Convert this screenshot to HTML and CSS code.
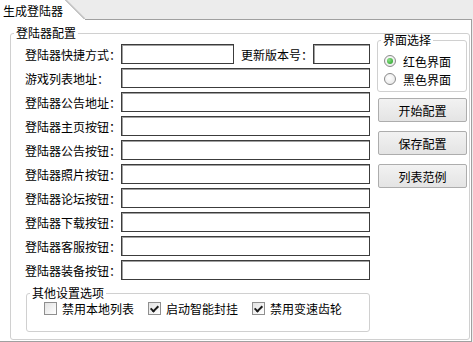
FILE: index.html
```html
<!DOCTYPE html>
<html lang="zh-CN">
<head>
  <meta charset="UTF-8" />
  <title>生成登陆器</title>
  <link rel="stylesheet" href="styles.css">
</head>
<body>
  <div class="tabbar">
    <div class="tab">生成登陆器</div>
    <svg class="tab-edge" width="20" height="20" viewBox="0 0 20 20">
      <polygon points="0,0 1,0 20,19 20,20 0,20" fill="#fff"/>
      <line x1="0.5" y1="0" x2="19.5" y2="19" stroke="#8c8c8c" stroke-width="1"/>
      <line x1="1.5" y1="0" x2="20.5" y2="19" stroke="#c9c9c9" stroke-width="1"/>
    </svg>
    <div class="tab-rest"></div>
  </div>

  <div class="panel">
    <fieldset class="group main">
      <legend>登陆器配置</legend>
      <div class="main-grid">
        <div class="fields">
          <div class="row">
            <label>登陆器快捷方式：</label>
            <input type="text" class="short">
            <label class="ver">更新版本号：</label>
            <input type="text" class="ver-input">
          </div>
          <div class="row"><label>游戏列表地址：</label><input type="text"></div>
          <div class="row"><label>登陆器公告地址：</label><input type="text"></div>
          <div class="row"><label>登陆器主页按钮：</label><input type="text"></div>
          <div class="row"><label>登陆器公告按钮：</label><input type="text"></div>
          <div class="row"><label>登陆器照片按钮：</label><input type="text"></div>
          <div class="row"><label>登陆器论坛按钮：</label><input type="text"></div>
          <div class="row"><label>登陆器下载按钮：</label><input type="text"></div>
          <div class="row"><label>登陆器客服按钮：</label><input type="text"></div>
          <div class="row"><label>登陆器装备按钮：</label><input type="text"></div>

          <fieldset class="group other">
            <legend>其他设置选项</legend>
            <div class="checks">
              <label class="check"><input type="checkbox">禁用本地列表</label>
              <label class="check"><input type="checkbox" checked>启动智能封挂</label>
              <label class="check"><input type="checkbox" checked>禁用变速齿轮</label>
            </div>
          </fieldset>
        </div>

        <div class="side">
          <fieldset class="group skin">
            <legend>界面选择</legend>
            <label class="radio"><input type="radio" name="skin" checked>红色界面</label>
            <label class="radio"><input type="radio" name="skin">黑色界面</label>
          </fieldset>
          <button>开始配置</button>
          <button>保存配置</button>
          <button>列表范例</button>
        </div>
      </div>
    </fieldset>
  </div>
</body>
</html>
```

FILE: styles.css
```css
body {
  margin: 0;
  background: #ececec;
  color: #000;
  font-family: "Noto Sans CJK SC", sans-serif;
  font-size: 12px;
}

.tabbar {
  display: flex;
  width: 472px;
  height: 20px;
}

.tab {
  width: 65px;
  padding: 3px 0 0 3px;
  box-sizing: border-box;
  background: #fff;
  line-height: 16px;
  white-space: nowrap;
}

.tab-edge {
  display: block;
  flex: none;
}

.tab-rest {
  flex: 1;
  border-bottom: 1px solid #a0a0a0;
}

.panel {
  width: 472px;
  height: 322px;
  box-sizing: border-box;
  padding-top: 6px;
  background: #fff;
  border-right: 1px solid #a0a0a0;
  border-bottom: 1px solid #a0a0a0;
}

.group {
  margin: 0;
  min-width: 0;
  border: 1px solid #d0d0d0;
  border-radius: 3px;
}

.group legend {
  padding: 0 2px;
  line-height: 14px;
}

.main {
  margin: 0 1px 0 10px;
  padding: 0 2px 7px 14px;
}

.main > legend {
  margin-left: -11px;
}

.main-grid {
  display: grid;
  grid-template-columns: 345px 90px;
  column-gap: 7px;
}

.fields {
  padding-top: 4px;
}

.row {
  display: flex;
  align-items: center;
  height: 20px;
  margin-bottom: 4px;
}

.row label {
  flex: none;
  width: 96px;
  white-space: nowrap;
}

.row input {
  flex: 1;
  min-width: 0;
  height: 20px;
  margin: 0;
  padding: 0 3px;
  box-sizing: border-box;
  border: 1px solid #3c3c3c;
  box-shadow: inset 1px 1px 0 #a0a0a0;
  background: #fff;
  font: inherit;
  outline: none;
}

.row .short {
  flex: none;
  width: 113px;
}

.row .ver {
  width: 72px;
  margin-left: 7px;
}

.row .ver-input {
  flex: none;
  width: 57px;
}

.other {
  margin: 6px 0 0 1px;
  padding: 2px 0 16px 17px;
}

.other > legend {
  margin-left: -14px;
}

.checks {
  display: flex;
  gap: 14px;
}

.check {
  display: flex;
  align-items: center;
  height: 13px;
  white-space: nowrap;
}

.check input {
  appearance: none;
  position: relative;
  width: 13px;
  height: 13px;
  margin: 0 5px 0 0;
  border: 1px solid #8f8f8f;
  background: linear-gradient(135deg, #e2e2e2, #fff);
}

.check input:checked::before {
  content: '';
  position: absolute;
  left: 3px;
  top: 1px;
  width: 3px;
  height: 6px;
  border: solid #1a1a1a;
  border-width: 0 2px 2px 0;
  transform: rotate(45deg);
}

.side {
  margin-top: -7px;
}

.skin {
  padding: 5px 0 3px 6px;
}

.skin > legend {
  margin-left: -3px;
}

.radio {
  display: flex;
  align-items: center;
  height: 18px;
  white-space: nowrap;
}

.radio input {
  appearance: none;
  position: relative;
  width: 12px;
  height: 12px;
  margin: 0 7px 0 0;
  border: 1px solid #8a8a8a;
  border-radius: 50%;
  background: radial-gradient(circle at 40% 40%, #fff, #e2e2e2);
}

.radio input:checked::before {
  content: '';
  position: absolute;
  left: 2px;
  top: 2px;
  width: 6px;
  height: 6px;
  border-radius: 50%;
  background: radial-gradient(circle at 35% 35%, #8be087, #1f9b1f);
}

.side button {
  display: block;
  width: 89px;
  height: 24px;
  margin: 9px 0 0 1px;
  padding: 0;
  border: 1px solid #adadad;
  border-radius: 2px;
  background: linear-gradient(#f2f2f2, #e4e4e4);
  color: #000;
  font: inherit;
}

.skin + button {
  margin-top: 6px;
}
```
